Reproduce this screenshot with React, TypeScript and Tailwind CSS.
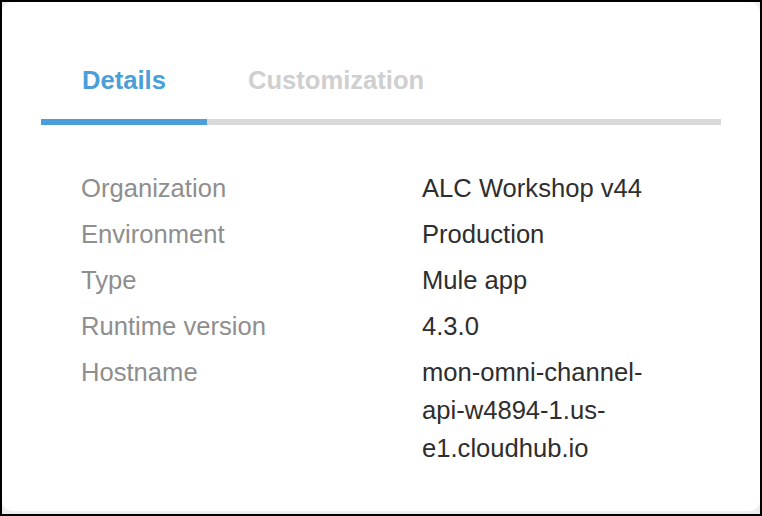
import React from "react";

const rows: [string, string][] = [
  ["Organization", "ALC Workshop v44"],
  ["Environment", "Production"],
  ["Type", "Mule app"],
  ["Runtime version", "4.3.0"],
  ["Hostname", "mon-omni-channel-api-w4894-1.us-e1.cloudhub.io"],
];

const App = () => {
  const [tab, setTab] = React.useState("Details");

  return (
    <div
      className="w-[762px] h-[516px] border-2 border-black bg-[#eceef0] flex flex-col"
      style={{ fontFamily: '"Liberation Sans", Arial, sans-serif' }}
    >
      <div className="flex-1 mb-[3px] bg-white rounded-[10px] px-[39px] pt-[63px]">
        {/* tabs */}
        <div className="flex border-b-[6px] border-[#d9d9d9]">
          {["Details", "Customization"].map((t) => (
            <button
              key={t}
              onClick={() => setTab(t)}
              className={
                t === tab
                  ? "px-[41px] pb-[24px] -mb-[6px] border-b-[6px] border-[#4a9fd9] text-[25.6px] leading-[30px] font-bold text-[#4a9fd9]"
                  : "px-[41px] pb-[24px] -mb-[6px] border-b-[6px] border-transparent text-[25.6px] leading-[30px] font-bold text-[#cfcfcf]"
              }
            >
              {t}
            </button>
          ))}
        </div>

        {/* details */}
        <div className="mt-[44px] pl-[40px] grid grid-cols-[341px_240px] gap-y-[8px] text-[25.6px] leading-[38px]">
          {rows.map(([label, value]) => (
            <React.Fragment key={label}>
              <div className="text-[#8e8e8e]">{label}</div>
              <div className="text-[#2e2e2e]">{value}</div>
            </React.Fragment>
          ))}
        </div>
      </div>
    </div>
  );
};

export default App;
